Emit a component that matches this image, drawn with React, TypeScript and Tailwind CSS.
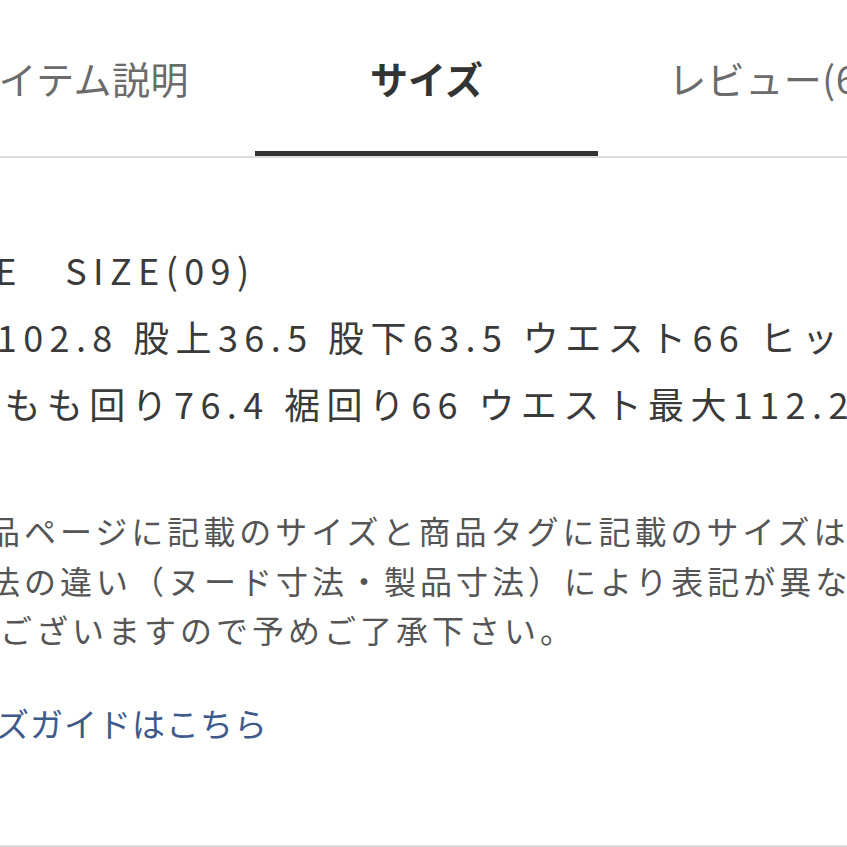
export default function App() {
  return (
    <div className="w-[847px] h-[847px] overflow-hidden bg-white font-['Noto_Sans_CJK_JP','Noto_Sans',sans-serif] border-b-2 border-[#dcdcdc]">
      {/* Tabs */}
      <div className="flex border-b-2 border-[#dcdcdc] -ml-[88px] w-[1029px]">
        <div className="w-[343px] h-[156px] flex justify-center pt-[59px] pr-[16px]">
          <span className="text-[38px] leading-none tracking-[0.5px] text-[#6b6b6b] whitespace-nowrap">アイテム説明</span>
        </div>
        <div className="w-[343px] h-[156px] flex justify-center pt-[59px] border-b-[5px] border-[#333]">
          <span className="text-[38px] leading-none font-bold text-[#333] whitespace-nowrap">サイズ</span>
        </div>
        <div className="w-[343px] h-[156px] flex justify-center pt-[59px]">
          <span className="text-[38px] leading-none tracking-[0.5px] text-[#6b6b6b] whitespace-nowrap">レビュー(6)</span>
        </div>
      </div>

      {/* Size list */}
      <div className="pt-[78px] text-[36px] leading-[67px] tracking-[6.4px] text-[#3a3a3a] whitespace-nowrap">
        <p className="-ml-[88px]">FREE　SIZE(09)</p>
        <p className="-ml-[88px]">総丈102.8 股上36.5 股下63.5 ウエスト66 ヒップ96</p>
        <p className="-ml-[38px]">太もも回り76.4 裾回り66 ウエスト最大112.2</p>
      </div>

      {/* Note */}
      <div className="pt-[69px] text-[32px] leading-[49.5px] tracking-[4px] text-[#555] whitespace-nowrap -ml-[48px]">
        <p>商品ページに記載のサイズと商品タグに記載のサイズは、</p>
        <p>寸法の違い（ヌード寸法・製品寸法）により表記が異なる場合</p>
        <p className="pl-[12px]">がございますので予めご了承下さい。</p>
      </div>

      {/* Link */}
      <div className="pt-[44px] -ml-[71px] whitespace-nowrap">
        <a href="#" className="text-[33px] leading-[49px] tracking-[1px] text-[#3d5a8a]">サイズガイドはこちら</a>
      </div>
    </div>
  );
}
